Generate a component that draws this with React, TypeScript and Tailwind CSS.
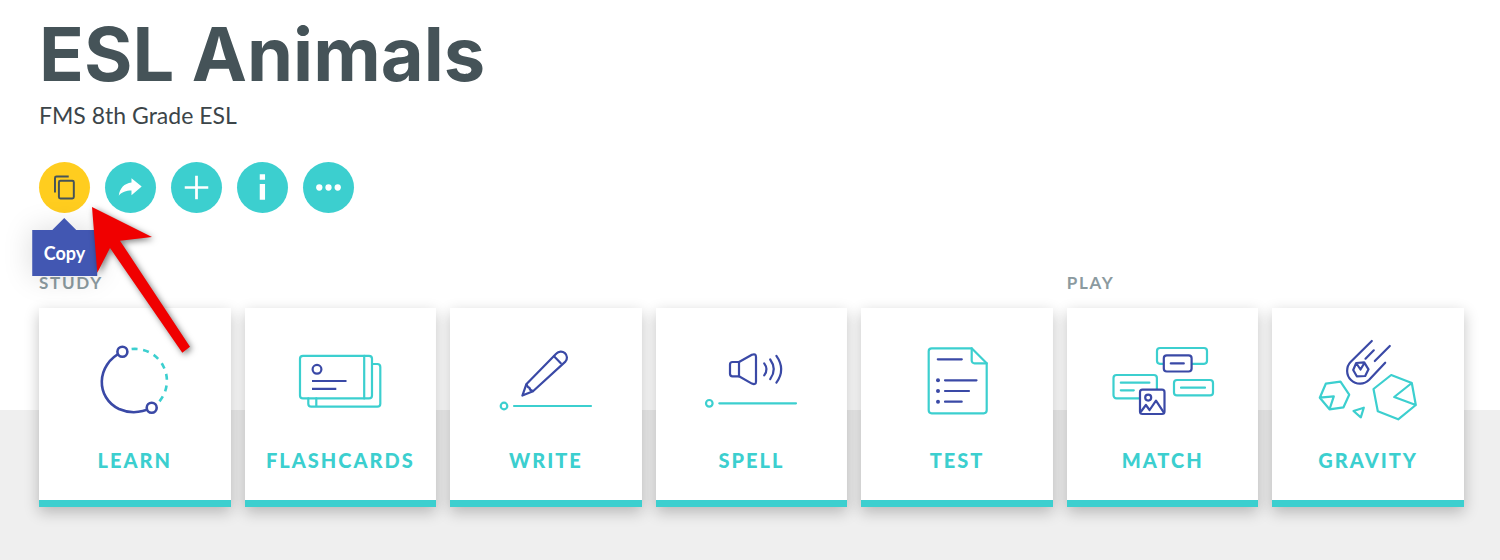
import React from 'react';

const TEAL = '#3ccfcf';
const BLUE = '#3a49a6';

type IconProps = { children: React.ReactNode };

function ModeIcon({ children }: IconProps) {
  return (
    <svg
      viewBox="0 0 108 84"
      className="h-[84px] w-[108px]"
      fill="none"
      stroke={TEAL}
      strokeWidth="2.2"
      strokeLinecap="round"
      strokeLinejoin="round"
      aria-hidden="true"
    >
      {children}
    </svg>
  );
}

const learnIcon = (
  <ModeIcon>
    <path d="M50.6 11A32 32 0 0 1 78.5 63.3" strokeWidth="2.6" strokeDasharray="6 5.6" strokeLinecap="butt" />
    <path d="M41.4 13.7A31.7 31.7 0 0 0 70.7 69.7" stroke="none" />
    <path d="M41.4 13.7C14 27 15 60 38 71Q54 78 70.7 69.7" stroke={BLUE} strokeWidth="2.6" />
    <circle cx="41.4" cy="13.7" r="5" fill="#fff" stroke={BLUE} strokeWidth="2.6" />
    <circle cx="70.7" cy="69.7" r="5" fill="#fff" stroke={BLUE} strokeWidth="2.6" />
  </ModeIcon>
);

const flashcardsIcon = (
  <ModeIcon>
    <rect x="14" y="17.8" width="72" height="42.6" rx="3" />
    <path d="M78.2 17.8v42.6M86 26h5.3a3 3 0 0 1 3 3v36.7a3 3 0 0 1-3 3h-66a3 3 0 0 1-3-3v-5.3M30.3 60.4v8.3" />
    <g stroke={BLUE} strokeLinecap="butt">
      <circle cx="31" cy="31.3" r="4.4" />
      <path d="M26 43h34.5M26 50.8h24.3" />
    </g>
  </ModeIcon>
);

const writeIcon = (
  <ModeIcon>
    <circle cx="12" cy="68" r="3.3" />
    <path d="M22 68h77" />
    <g stroke={BLUE}>
      <path d="M30.4 57.6 34.3 46.3 64.4 15.6a6 6 0 0 1 9 8L41 53.2z" />
      <path d="M62 18.3l6.8 6.9M34.5 46.5q1.2 3 3 3.4.2 2.4 3.5 3.2" />
    </g>
  </ModeIcon>
);

const spellIcon = (
  <ModeIcon>
    <circle cx="12.3" cy="65.3" r="3.3" />
    <path d="M22.3 65.3H99" />
    <g stroke={BLUE}>
      <path d="M42 24h-6.5a2.5 2.5 0 0 0-2.5 2.5v9.3a2.5 2.5 0 0 0 2.5 2.5H42z" />
      <path d="M42 24l12.9-7.2Q59 15.2 59 19v24.4q0 3.8-4.1 2.2L42 38.3" />
      <path d="M67.2 25.3q4.6 6 0 12M73.2 21.5q7.2 9.9 0 19.6M79.4 17.8q9.6 13.6 0 26.8" />
    </g>
  </ModeIcon>
);

const testIcon = (
  <ModeIcon>
    <path d="M68.7 10.3h-40a3 3 0 0 0-3 3v59a3 3 0 0 0 3 3h52a3 3 0 0 0 3-3V25.3z" />
    <path d="M68.7 10.3v12.2a2.8 2.8 0 0 0 2.8 2.8h12.2" />
    <path d="M34.8 21.3h24M42 42.3h31.5M42 53h24M42 63.7h16.7" stroke={BLUE} />
    <g fill={BLUE} stroke="none">
      <circle cx="35" cy="42.3" r="2" />
      <circle cx="35" cy="53" r="2" />
      <circle cx="35" cy="63.7" r="2" />
    </g>
  </ModeIcon>
);

const matchIcon = (
  <ModeIcon>
    <rect x="48" y="10" width="50" height="15.8" rx="3" />
    <rect x="4.5" y="37" width="43.4" height="23.3" rx="3" />
    <rect x="65" y="42" width="39" height="15.4" rx="3" />
    <path d="M11.8 44.7h28.6M11.8 52.3h13M72 49.7h24" />
    <g stroke={BLUE} fill="#fff">
      <rect x="54.8" y="17.3" width="27.8" height="16.2" rx="3" />
      <path d="M61.8 25.4h13" />
      <rect x="31" y="51.7" width="24.5" height="24.3" rx="2.5" />
      <circle cx="39.2" cy="59.6" r="3" />
      <path d="M32.4 73l4.5-6 3.7 5 6.4-9.4 7.4 11.2" fill="none" />
    </g>
  </ModeIcon>
);

const gravityIcon = (
  <ModeIcon>
    <path d="M11.8 45.7l14.7-2 8.7 13-5.7 12.6-14 2-9.7-11.6zM5.8 59.7l14-1.4-4.3 13" />
    <path d="M39.5 73l10.3-3.3-3 9.6z" />
    <path d="M77.2 37l20.6 8 4 22-17.6 14.3-20.4-8L59.5 51zM97.8 45L80.2 59l21.6 8" />
    <g stroke={BLUE}>
      <path d="M57.8 3L36.8 23.8a12.8 12.8 0 0 0 18.4 18L71.2 24.7" />
      <path d="M59.8 12.3l-8.3 8.4M75.8 8l-15 15" />
      <path d="M42.2 25l8-.7 4.3 7-3.3 6.7-8.4.3-3.6-6.3zM42.8 26l3.7 5.5 3.9-6.5" />
    </g>
  </ModeIcon>
);

const studyModes = [
  { name: 'LEARN', icon: learnIcon },
  { name: 'FLASHCARDS', icon: flashcardsIcon },
  { name: 'WRITE', icon: writeIcon },
  { name: 'SPELL', icon: spellIcon },
  { name: 'TEST', icon: testIcon },
];

const playModes = [
  { name: 'MATCH', icon: matchIcon },
  { name: 'GRAVITY', icon: gravityIcon },
];

const actions = [
  {
    label: 'Share',
    icon: <path d="M27 16.5v4.4C19.5 22 15.2 26.5 14 34.3c3.3-3.7 7.3-5.2 13-5.2v4.7l10.4-8.8z" fill="#fff" />,
  },
  { label: 'Add', icon: <path d="M26 14v24M14 26h24" stroke="#fff" strokeWidth="2.8" /> },
  { label: 'Info', icon: <path d="M23.2 12.6h5.4V18h-5.4zM23.2 22.5h5.4v16h-5.4z" fill="#fff" /> },
  {
    label: 'More',
    icon: (
      <g fill="#fff">
        <circle cx="16.6" cy="26" r="3.2" />
        <circle cx="26" cy="26" r="3.2" />
        <circle cx="35.4" cy="26" r="3.2" />
      </g>
    ),
  },
];

function ModeCard({ name, icon }: { name: string; icon: React.ReactNode }) {
  return (
    <a
      href="#"
      className="flex flex-col items-center border-b-[7px] border-[#3ccfcf] bg-white pt-[30px] pb-[25px] shadow-[0_5px_14px_rgba(0,0,0,0.24)]"
    >
      {icon}
      <span className="mt-[23px] text-xl leading-[30px] font-black tracking-widest text-[#3ccfcf]">{name}</span>
    </a>
  );
}

export default function App() {
  return (
    <main className="min-h-screen bg-[linear-gradient(to_bottom,#fff_410px,#efefef_410px)] pt-3 pr-9 pb-12 pl-[39px] font-['Lato',sans-serif]">
      <header>
        <h1 className="font-['Inter',sans-serif] text-[74px] leading-[84px] font-bold text-[#455358]">ESL Animals</h1>
        <p className="mt-1 text-[23px] leading-[30px] text-[#3c4549]">FMS 8th Grade ESL</p>
      </header>

      <div className="relative mt-8 flex gap-[15px]">
        <div className="relative">
          <button
            type="button"
            aria-label="Copy"
            aria-describedby="copy-tip"
            className="block size-[51px] cursor-pointer rounded-full bg-[#ffcd1f]"
          >
            <svg viewBox="0 0 52 52" fill="none" stroke="#455358" strokeWidth="2" aria-hidden="true">
              <path d="M16.3 31V16.3a1.5 1.5 0 0 1 1.5-1.5H30.3" />
              <rect x="20.3" y="19.2" width="15.2" height="18" rx="1.5" />
            </svg>
          </button>
          {/* tooltip */}
          <div
            id="copy-tip"
            role="tooltip"
            className="absolute top-full left-1/2 mt-[17px] -translate-x-1/2 bg-[#4257b2] px-3 py-[11px] text-lg leading-6 font-bold text-white shadow-[0_0_30px_rgba(0,0,0,0.15)]"
          >
            <svg viewBox="0 0 24 12" className="absolute bottom-full left-1/2 h-3 w-6 -translate-x-1/2" aria-hidden="true">
              <path d="M0 12L12 0l12 12z" fill="#4257b2" />
            </svg>
            Copy
          </div>
        </div>
        {actions.map((action) => (
          <button
            key={action.label}
            type="button"
            aria-label={action.label}
            className="size-[51px] cursor-pointer rounded-full bg-[#3ccfcf]"
          >
            <svg viewBox="0 0 52 52" fill="none" aria-hidden="true">
              {action.icon}
            </svg>
          </button>
        ))}
        {/* pointer arrow */}
        <svg
          viewBox="0 0 110 156"
          className="pointer-events-none absolute top-11 left-12 z-10 h-[156px] w-[110px] drop-shadow-[2px_2px_3px_rgba(0,0,0,0.5)]"
          aria-hidden="true"
        >
          <path d="M5 1l60 30-32 3.7 70 106-7.700 6L23 42 10.300 66.700z" fill="#f00000" />
        </svg>
      </div>

      <div className="mt-[58px] grid grid-cols-7 gap-[14px]">
        <section className="col-span-5">
          <h2 className="text-[17px] leading-6 font-bold tracking-widest text-[#8b9a9f]">STUDY</h2>
          <div className="mt-[13px] grid grid-cols-5 gap-[14px]">
            {studyModes.map((mode) => (
              <ModeCard key={mode.name} name={mode.name} icon={mode.icon} />
            ))}
          </div>
        </section>
        <section className="col-span-2">
          <h2 className="text-[17px] leading-6 font-bold tracking-widest text-[#8b9a9f]">PLAY</h2>
          <div className="mt-[13px] grid grid-cols-2 gap-[14px]">
            {playModes.map((mode) => (
              <ModeCard key={mode.name} name={mode.name} icon={mode.icon} />
            ))}
          </div>
        </section>
      </div>
    </main>
  );
}
